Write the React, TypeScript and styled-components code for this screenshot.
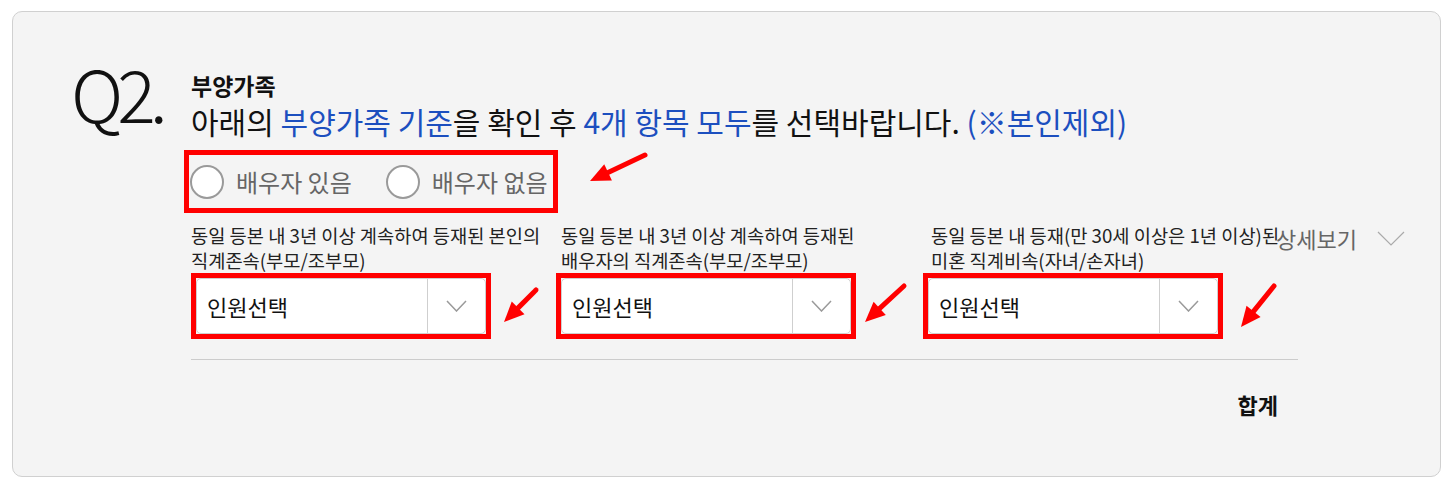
import React, { useState } from 'react';
import styled, { createGlobalStyle } from 'styled-components';

const GlobalStyle = createGlobalStyle`
  body {
    margin: 0;
    background: #ffffff;
    font-family: "Noto Sans CJK KR", "Noto Sans", sans-serif;
  }
`;

const Page = styled.div`
  padding: 11px 13px 16px 12px;
`;

const Card = styled.section`
  position: relative;
  display: flex;
  height: 466px;
  box-sizing: border-box;
  padding: 60px 0 0 58px;
  background: #f4f4f4;
  border: 1px solid #d0d0d0;
  border-radius: 10px;
`;

const QuestionNo = styled.div`
  width: 120px;
  flex-shrink: 0;
  margin-top: -20px;
  font-family: "Noto Sans CJK KR", "Noto Sans", sans-serif;
  font-weight: 300;
  font-size: 72px;
  line-height: 80px;
  letter-spacing: -6px;
  color: #111;
`;

const Body = styled.div`
  position: relative;
  width: 1107px;
  display: flex;
  flex-direction: column;
`;

const SubTitle = styled.div`
  font-size: 23px;
  font-weight: 700;
  line-height: 26px;
  color: #111;
`;

const Title = styled.h2`
  margin: 4px 0 0;
  font-size: 30px;
  font-weight: 400;
  line-height: 38px;
  color: #111;
`;

const Accent = styled.span`
  color: #1c4fbf;
`;

const AnnotatedRow = styled.div<{ $nudge?: number }>`
  display: flex;
  align-items: flex-start;
  margin-left: ${(p) => (p.$nudge ? `${p.$nudge}px` : '0')};
`;

const RedBox = styled.div`
  border: 5px solid #ff0000;
  box-sizing: border-box;
`;

const RadioBox = styled(RedBox)`
  display: flex;
  align-items: center;
  gap: 34px;
  margin: 10px 0 0 -7px;
  height: 63px;
  padding: 0 5px 0 1px;
`;

const RadioLabel = styled.label`
  display: flex;
  align-items: center;
  gap: 12px;
  font-size: 24px;
  color: #666;
  cursor: pointer;
`;

const RadioCircle = styled.span<{ $checked: boolean }>`
  width: 30px;
  height: 30px;
  border-radius: 50%;
  border: 2px solid ${(p) => (p.$checked ? '#1c4fbf' : '#9a9a9a')};
  background: #fff;
  box-shadow: ${(p) => (p.$checked ? 'inset 0 0 0 7px #fff, inset 0 0 0 20px #1c4fbf' : 'none')};
`;

const ArrowMark = styled.svg<{ $dx: number; $dy: number }>`
  flex-shrink: 0;
  margin: ${(p) => `${p.$dy}px 0 0 ${p.$dx}px`};
`;

const Details = styled.div`
  position: relative;
  display: grid;
  grid-template-columns: 370px 370px 370px;
  margin-top: 9px;
`;

const Column = styled.div`
  display: flex;
  flex-direction: column;
`;

const ColumnLabel = styled.div`
  width: 360px;
  height: 51px;
  font-size: 18.7px;
  line-height: 25px;
  word-break: keep-all;
  color: #222;
`;

const SelectBox = styled(RedBox)`
  width: 300px;
  height: 66px;
`;

const Select = styled.div`
  display: flex;
  height: 100%;
  background: #fff;
  border: 1px solid #cfcfcf;
  border-radius: 5px;
  box-sizing: border-box;
`;

const SelectValue = styled.div`
  flex: 1;
  display: flex;
  align-items: center;
  padding-left: 10px;
  font-size: 22px;
  color: #111;
`;

const SelectHandle = styled.div`
  width: 57px;
  display: flex;
  align-items: center;
  justify-content: center;
  border-left: 1px solid #cfcfcf;
`;

const MoreToggle = styled.button`
  position: absolute;
  top: 0;
  right: -107px;
  display: flex;
  align-items: center;
  gap: 20px;
  padding: 0;
  border: none;
  background: none;
  font-family: inherit;
  font-size: 22px;
  color: #666;
  cursor: pointer;
`;

const Divider = styled.hr`
  width: 1107px;
  margin: 20px 0 0;
  border: none;
  border-top: 1px solid #cccccc;
`;

const Total = styled.div`
  align-self: flex-end;
  margin: 28px 20px 0 0;
  font-size: 22px;
  font-weight: 700;
  color: #111;
`;

type ArrowSpec = { w: number; h: number; dx: number; dy: number };

const Arrow = ({ w, h, dx, dy }: ArrowSpec) => {
  // unit vector from tip (bottom-left) to tail (top-right)
  const len = Math.hypot(w - 3, h - 3);
  const ux = (w - 3) / len;
  const uy = -(h - 3) / len;
  const head = 20;
  const half = 9;
  const bx = ux * head;
  const by = h + uy * head;
  const p1 = `${bx - uy * half},${by + ux * half}`;
  const p2 = `${bx + uy * half},${by - ux * half}`;
  return (
    <ArrowMark $dx={dx} $dy={dy} width={w} height={h} viewBox={`0 0 ${w} ${h}`} overflow="visible">
      <line x1={w - 3} y1={3} x2={bx} y2={by} stroke="#ff0000" strokeWidth={5} strokeLinecap="round" />
      <polygon points={`0,${h} ${p1} ${p2}`} fill="#ff0000" />
    </ArrowMark>
  );
};

const Chevron = ({ w, h, color, sw }: { w: number; h: number; color: string; sw: number }) => (
  <svg width={w} height={h} viewBox={`0 0 ${w} ${h}`}>
    <polyline points={`1,1 ${w / 2},${h - 1} ${w - 1},1`} fill="none" stroke={color} strokeWidth={sw} />
  </svg>
);

const columns: { label: string; nudge: number; arrow: ArrowSpec }[] = [
  {
    label: '동일 등본 내 3년 이상 계속하여 등재된 본인의 직계존속(부모/조부모)',
    nudge: 0,
    arrow: { w: 35, h: 35, dx: 13, dy: 14 },
  },
  {
    label: '동일 등본 내 3년 이상 계속하여 등재된 배우자의 직계존속(부모/조부모)',
    nudge: -5,
    arrow: { w: 42, h: 39, dx: 9, dy: 10 },
  },
  {
    label: '동일 등본 내 등재(만 30세 이상은 1년 이상)된 미혼 직계비속(자녀/손자녀)',
    nudge: -8,
    arrow: { w: 36, h: 44, dx: 18, dy: 10 },
  },
];

export default function App() {
  const [spouse, setSpouse] = useState<'yes' | 'no' | null>(null);

  return (
    <Page>
      <GlobalStyle />
      <Card>
        <QuestionNo>Q2.</QuestionNo>
        <Body>
          <SubTitle>부양가족</SubTitle>
          <Title>
            아래의 <Accent>부양가족 기준</Accent>을 확인 후 <Accent>4개 항목 모두</Accent>를 선택바랍니다.{' '}
            <Accent>(※본인제외)</Accent>
          </Title>

          <AnnotatedRow>
            <RadioBox>
              <RadioLabel onClick={() => setSpouse('yes')}>
                <RadioCircle $checked={spouse === 'yes'} />
                배우자 있음
              </RadioLabel>
              <RadioLabel onClick={() => setSpouse('no')}>
                <RadioCircle $checked={spouse === 'no'} />
                배우자 없음
              </RadioLabel>
            </RadioBox>
            <Arrow w={58} h={29} dx={32} dy={12} />
          </AnnotatedRow>

          <Details>
            {columns.map((col) => (
              <Column key={col.label}>
                <ColumnLabel>{col.label}</ColumnLabel>
                <AnnotatedRow $nudge={col.nudge}>
                  <SelectBox>
                    <Select>
                      <SelectValue>인원선택</SelectValue>
                      <SelectHandle>
                        <Chevron w={21} h={12} color="#9a9a9a" sw={1.5} />
                      </SelectHandle>
                    </Select>
                  </SelectBox>
                  <Arrow {...col.arrow} />
                </AnnotatedRow>
              </Column>
            ))}
            <MoreToggle>
              상세보기
              <Chevron w={28} h={15} color="#aaaaaa" sw={1.2} />
            </MoreToggle>
          </Details>

          <Divider />
          <Total>합계</Total>
        </Body>
      </Card>
    </Page>
  );
}
